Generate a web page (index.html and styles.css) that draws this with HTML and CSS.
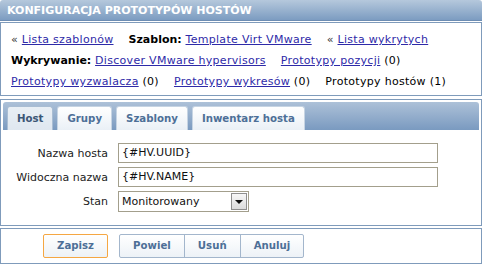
FILE: index.html
```html
<!DOCTYPE html>
<html lang="pl">
<head>
  <meta charset="utf-8">
  <title>Konfiguracja prototypów hostów</title>
  <link rel="stylesheet" href="styles.css">
</head>
<body>
  <div class="page">
    <div class="header">KONFIGURACJA PROTOTYPÓW HOSTÓW</div>

    <div class="info">
      <div class="info-row">
        <span class="item"><span class="raquo">&laquo;</span> <a href="#">Lista szablonów</a></span>
        <span class="item"><b>Szablon:</b> <a href="#">Template Virt VMware</a></span>
        <span class="item"><span class="raquo">&laquo;</span> <a href="#">Lista wykrytych</a></span>
      </div>
      <div class="info-row">
        <span class="item"><b>Wykrywanie:</b> <a href="#">Discover VMware hypervisors</a></span>
        <span class="item"><a href="#">Prototypy pozycji</a> (0)</span>
      </div>
      <div class="info-row">
        <span class="item"><a href="#">Prototypy wyzwalacza</a> (0)</span>
        <span class="item"><a href="#">Prototypy wykresów</a> (0)</span>
        <span class="item">Prototypy hostów (1)</span>
      </div>
    </div>

    <div class="form-box">
      <div class="tabs">
        <span class="tab active">Host</span>
        <span class="tab">Grupy</span>
        <span class="tab">Szablony</span>
        <span class="tab">Inwentarz hosta</span>
      </div>
      <div class="form">
        <label class="form-label">Nazwa hosta</label>
        <div class="field">{#HV.UUID}</div>
        <label class="form-label">Widoczna nazwa</label>
        <div class="field">{#HV.NAME}</div>
        <label class="form-label">Stan</label>
        <div class="select">
          <span class="select-text">Monitorowany</span>
          <span class="select-btn"><span class="arrow"></span></span>
        </div>
      </div>
    </div>

    <div class="buttons">
      <span class="btn main">Zapisz</span>
      <div class="btn-group">
        <span class="btn">Powiel</span>
        <span class="btn">Usuń</span>
        <span class="btn">Anuluj</span>
      </div>
    </div>
  </div>
</body>
</html>
```
FILE: styles.css
```css
body {
  margin: 0;
  font-family: "DejaVu Sans", Verdana, sans-serif;
  font-size: 11px;
  color: #000;
  background: #fff;
}

.page { width: 482px; }

.header {
  height: 20px;
  line-height: 21px;
  padding-left: 7px;
  border-bottom: 1px solid #6d8db3;
  border-radius: 3px 3px 0 0;
  background: linear-gradient(#b5c8dc, #7c9cc1);
  color: #fff;
  font-weight: bold;
  font-size: 11px;
}

.info {
  margin-top: 1px;
  border: 1px solid #7f9bbb;
  padding: 6px 10px 3px;
}
.info-row {
  display: flex;
  gap: 15px;
  line-height: 21px;
  white-space: nowrap;
  letter-spacing: 0.3px;
}
.info-row b { letter-spacing: 0; }
.raquo { color: #333; }
a { color: #2e2aa8; text-decoration: underline; }

.form-box {
  margin-top: 3px;
  border: 1px solid #7f9bbb;
  padding: 2px 2px 13px;
}
.tabs {
  display: flex;
  align-items: flex-end;
  gap: 4px;
  height: 28px;
  padding-left: 4px;
  border-radius: 3px 3px 0 0;
  background: linear-gradient(#adc1d8, #7a9ac0);
}
.tab {
  height: 23px;
  line-height: 23px;
  padding: 0 9px;
  border: 1px solid #c6d4e3;
  border-bottom: none;
  border-radius: 3px 3px 0 0;
  background: linear-gradient(#ffffff, #eaf0f6);
  color: #4d6f97;
  font-weight: bold;
  font-size: 10.2px;
}
.tab.active {
  background: linear-gradient(#e9eff5, #dfe7f0);
  border-color: #a9bdd3;
  color: #3b5676;
}

.form {
  display: grid;
  grid-template-columns: 105px auto;
  column-gap: 10px;
  row-gap: 4px;
  margin-top: 13px;
  align-items: center;
}
.form-label { text-align: right; color: #222; }
.field {
  width: 312px;
  height: 18px;
  line-height: 18px;
  padding: 0 3px;
  border: 1px solid #a39f8c;
  color: #111;
}
.select {
  display: flex;
  align-items: center;
  justify-content: space-between;
  width: 126px;
  height: 19px;
  padding-left: 3px;
  border: 1px solid #a39f8c;
  color: #111;
}
.select-btn {
  width: 14px;
  height: 15px;
  margin-right: 1px;
  border: 1px solid #8f8f8f;
  background: linear-gradient(#f7f7f7, #dcdcdc);
  display: flex;
  align-items: center;
  justify-content: center;
}
.arrow {
  width: 0;
  height: 0;
  border-left: 4px solid transparent;
  border-right: 4px solid transparent;
  border-top: 4px solid #111;
}

.buttons {
  display: flex;
  gap: 11px;
  margin-top: 2px;
  border: 1px solid #7f9bbb;
  padding: 5px 0 5px 42px;
}
.btn-group { display: flex; }
.btn {
  height: 22px;
  line-height: 22px;
  padding: 0 13px;
  border: 1px solid #a3b6cc;
  border-radius: 2px;
  background: linear-gradient(#ffffff, #edf2f7);
  color: #4d6f97;
  font-weight: bold;
  font-size: 10.2px;
}
.btn.main { border-color: #f5a743; }
.btn-group .btn { border-radius: 0; margin-left: -1px; }
.btn-group .btn:first-child { border-radius: 2px 0 0 2px; margin-left: 0; }
.btn-group .btn:last-child { border-radius: 0 2px 2px 0; }
```
